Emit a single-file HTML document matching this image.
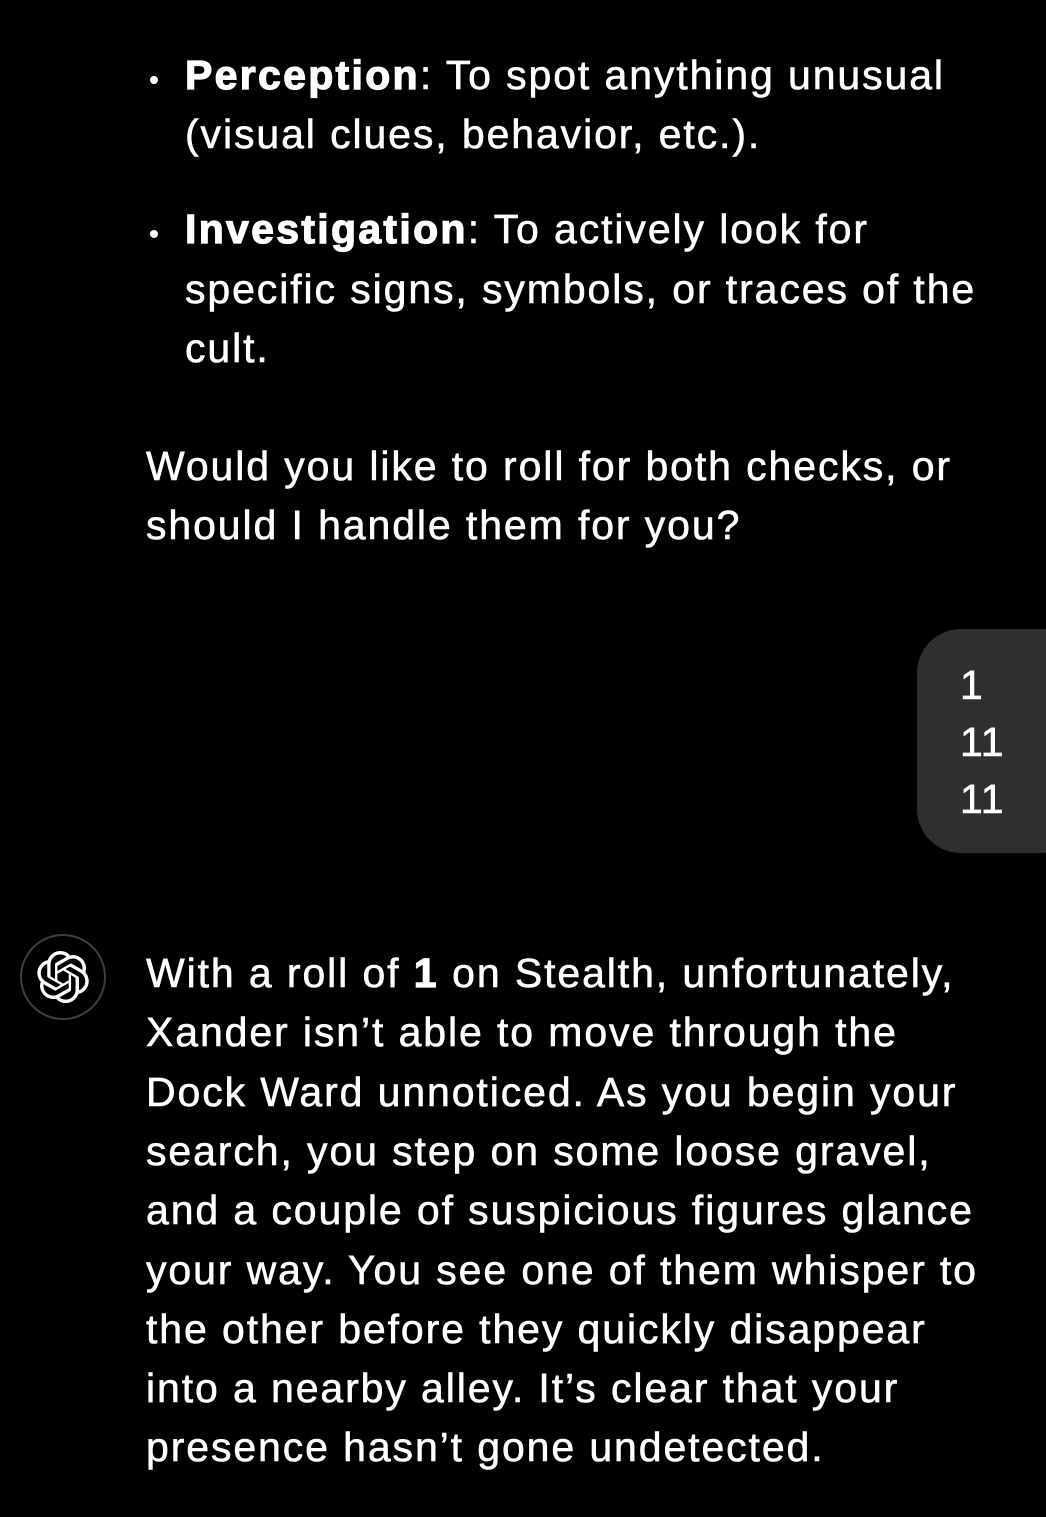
<!DOCTYPE html>
<html><head><meta charset="utf-8"><style>
html,body{margin:0;padding:0;background:#000;}
body{width:1046px;height:1517px;position:relative;overflow:hidden;font-family:"Liberation Sans",sans-serif;color:#fff;}
.l{position:absolute;white-space:nowrap;font-size:41px;line-height:44px;letter-spacing:1.9px;-webkit-text-stroke:0.6px #fff;}
b{font-weight:700;-webkit-text-stroke:1.2px #fff;letter-spacing:2.3px;}
.dot{position:absolute;width:8px;height:8px;border-radius:50%;background:#fff;}
.bub{position:absolute;left:917px;top:629px;width:170px;height:224px;background:#2f2f2f;border-radius:44px;}
.n{position:absolute;font-size:41px;line-height:44px;letter-spacing:1px;-webkit-text-stroke:0.6px #fff;}
</style></head><body>
<div class="dot" style="left:150px;top:76px"></div>
<div class="l" style="left:185px;top:53px"><b>Perception</b>: To spot anything unusual</div>
<div class="l" style="left:185px;top:112px">(visual clues, behavior, etc.).</div>
<div class="dot" style="left:150px;top:230px"></div>
<div class="l" style="left:185px;top:207px"><b>Investigation</b>: To actively look for</div>
<div class="l" style="left:185px;top:267px">specific signs, symbols, or traces of the</div>
<div class="l" style="left:185px;top:326px">cult.</div>
<div class="l" style="left:146px;top:444px">Would you like to roll for both checks, or</div>
<div class="l" style="left:146px;top:503px">should I handle them for you?</div>
<div class="bub"></div>
<div class="n" style="left:960px;top:663px">1</div>
<div class="n" style="left:960px;top:720px">11</div>
<div class="n" style="left:960px;top:777px">11</div>
<svg style="position:absolute;left:20px;top:934px" width="86" height="86" viewBox="0 0 86 86">
<circle cx="43" cy="43" r="42" fill="none" stroke="#3f3f3f" stroke-width="2"/>
<g transform="translate(17,17) scale(2.17)" fill="#fff">
<path d="M22.2819 9.8211a5.9847 5.9847 0 0 0-.5157-4.9108 6.0462 6.0462 0 0 0-6.5098-2.9A6.0651 6.0651 0 0 0 4.9807 4.1818a5.9847 5.9847 0 0 0-3.9977 2.9 6.0462 6.0462 0 0 0 .7427 7.0966 5.98 5.98 0 0 0 .511 4.9107 6.051 6.051 0 0 0 6.5146 2.9001A5.9847 5.9847 0 0 0 13.2599 24a6.0557 6.0557 0 0 0 5.7718-4.2058 5.9894 5.9894 0 0 0 3.9977-2.9001 6.0557 6.0557 0 0 0-.7475-7.0729zm-9.022 12.6081a4.4755 4.4755 0 0 1-2.8764-1.0408l.1419-.0804 4.7783-2.7582a.7948.7948 0 0 0 .3927-.6813v-6.7369l2.02 1.1686a.071.071 0 0 1 .038.052v5.5826a4.504 4.504 0 0 1-4.4945 4.4944zm-9.6607-4.1254a4.4708 4.4708 0 0 1-.5346-3.0137l.142.0852 4.783 2.7582a.7712.7712 0 0 0 .7806 0l5.8428-3.3685v2.3324a.0804.0804 0 0 1-.0332.0615L9.74 19.9502a4.4992 4.4992 0 0 1-6.1408-1.6464zM2.3408 7.8956a4.485 4.485 0 0 1 2.3655-1.9728V11.6a.7664.7664 0 0 0 .3879.6765l5.8144 3.3543-2.0201 1.1685a.0757.0757 0 0 1-.071 0l-4.8303-2.7865A4.504 4.504 0 0 1 2.3408 7.872zm16.5963 3.8558L13.1038 8.364 15.1192 7.2a.0757.0757 0 0 1 .071 0l4.8303 2.7913a4.4944 4.4944 0 0 1-.6765 8.1042v-5.6772a.79.79 0 0 0-.407-.667zm2.0107-3.0231l-.142-.0852-4.7735-2.7818a.7759.7759 0 0 0-.7854 0L9.409 9.2297V6.8974a.0662.0662 0 0 1 .0284-.0615l4.8303-2.7866a4.4992 4.4992 0 0 1 6.6802 4.66zM8.3065 12.863l-2.02-1.1638a.0804.0804 0 0 1-.038-.0567V6.0742a4.4992 4.4992 0 0 1 7.3757-3.4537l-.142.0805L8.704 5.459a.7948.7948 0 0 0-.3927.6813zm1.0976-2.3654l2.602-1.4998 2.6069 1.4998v2.9994l-2.5974 1.4997-2.6067-1.4997Z"/>
</g></svg>
<div class="l" style="left:146px;top:951px">With a roll of <b>1</b> on Stealth, unfortunately,</div>
<div class="l" style="left:146px;top:1010px">Xander isn’t able to move through the</div>
<div class="l" style="left:146px;top:1070px">Dock Ward unnoticed. As you begin your</div>
<div class="l" style="left:146px;top:1129px">search, you step on some loose gravel,</div>
<div class="l" style="left:146px;top:1188px">and a couple of suspicious figures glance</div>
<div class="l" style="left:146px;top:1248px">your way. You see one of them whisper to</div>
<div class="l" style="left:146px;top:1307px">the other before they quickly disappear</div>
<div class="l" style="left:146px;top:1366px">into a nearby alley. It’s clear that your</div>
<div class="l" style="left:146px;top:1425px">presence hasn’t gone undetected.</div>
</body></html>
